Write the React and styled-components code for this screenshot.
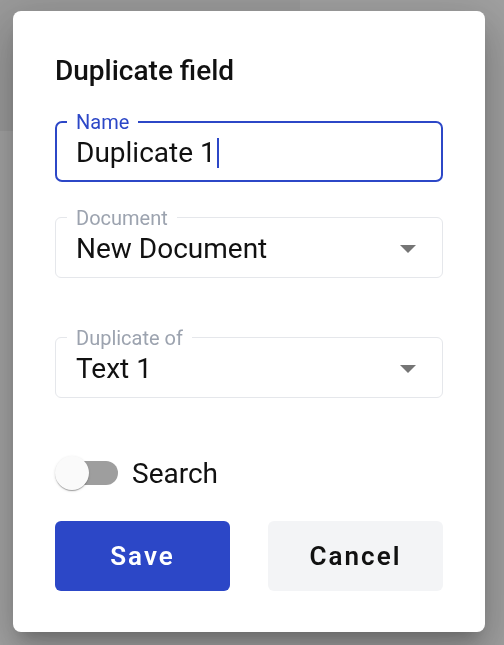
import React from "react";
import styled, { createGlobalStyle } from "styled-components";

const BLUE = "#2c47c7";

function Field({ label, value, focused, select, space }) {
  return (
    <FieldBox $focused={focused} $space={space}>
      <Legend $focused={focused}>{label}</Legend>
      <Value>
        {value}
        {focused && <Caret />}
      </Value>
      {select && <Arrow />}
    </FieldBox>
  );
}

function App() {
  return (
    <>
      <GlobalStyle />
      <Page>
        <LeftPanel>
          <PanelHeader />
        </LeftPanel>
        <RightPanel />
      </Page>
      <Backdrop>
        <Dialog>
          <Title>Duplicate field</Title>
          <Field label="Name" value="Duplicate 1" focused space={0} />
          <Field label="Document" value="New Document" select space={35} />
          <Field label="Duplicate of" value="Text 1" select space={59} />
          <ToggleRow>
            <Switch>
              <Track />
              <Thumb />
            </Switch>
            <ToggleLabel>Search</ToggleLabel>
          </ToggleRow>
          <Actions>
            <Button $primary>Save</Button>
            <Button>Cancel</Button>
          </Actions>
        </Dialog>
      </Backdrop>
    </>
  );
}

const GlobalStyle = createGlobalStyle`
  html, body {
    margin: 0;
    height: 100%;
  }
  body {
    font-family: Roboto, "Noto Sans", Arial, sans-serif;
    overflow: hidden;
  }
`;

const Page = styled.div`
  display: grid;
  grid-template-columns: 300px 1fr;
  height: 100vh;
`;

const LeftPanel = styled.div`
  display: flex;
  flex-direction: column;
  background-color: #ffffff;
`;

const PanelHeader = styled.div`
  height: 131px;
  background-color: #f1f1f1;
`;

const RightPanel = styled.div`
  background-color: #fafafa;
`;

const Backdrop = styled.div`
  position: fixed;
  inset: 0;
  display: flex;
  align-items: flex-start;
  padding: 11px 0 0 13px;
  background-color: rgba(0, 0, 0, 0.365);
`;

const Dialog = styled.div`
  width: 472px;
  box-sizing: border-box;
  padding: 43px 42px 41px;
  display: flex;
  flex-direction: column;
  background-color: #ffffff;
  border-radius: 8px;
  box-shadow: 0 11px 15px -7px rgba(0, 0, 0, 0.2),
    0 24px 38px 3px rgba(0, 0, 0, 0.14), 0 9px 46px 8px rgba(0, 0, 0, 0.12);
`;

const Title = styled.h2`
  margin: 0 0 33px;
  font-size: 28px;
  line-height: 34px;
  font-weight: 500;
  color: #111111;
`;

const FieldBox = styled.div`
  position: relative;
  display: flex;
  align-items: flex-start;
  height: 61px;
  box-sizing: border-box;
  margin-top: ${(p) => p.$space}px;
  border: ${(p) => (p.$focused ? `2px solid ${BLUE}` : "1px solid #e5e7eb")};
  border-radius: ${(p) => (p.$focused ? 7 : 6)}px;
  padding: ${(p) => (p.$focused ? "13px 25px 0 19px" : "14px 26px 0 20px")};
`;

const Legend = styled.span`
  position: absolute;
  top: ${(p) => (p.$focused ? -11 : -10)}px;
  left: ${(p) => (p.$focused ? 10 : 11)}px;
  padding: 0 9px;
  background-color: #ffffff;
  font-size: 20px;
  line-height: 20px;
  color: ${(p) => (p.$focused ? BLUE : "#9ca3af")};
`;

const Value = styled.div`
  flex: 1;
  display: flex;
  align-items: center;
  font-size: 28px;
  line-height: 33px;
  color: #111111;
`;

const Caret = styled.span`
  width: 2px;
  height: 30px;
  margin-left: 1px;
  background-color: ${BLUE};
`;

const Arrow = styled.span`
  margin-top: 13px;
  width: 0;
  height: 0;
  border-left: 8.5px solid transparent;
  border-right: 8.5px solid transparent;
  border-top: 8.5px solid #757575;
`;

const ToggleRow = styled.div`
  display: flex;
  align-items: center;
  height: 36px;
  margin-top: 57px;
`;

const Switch = styled.div`
  position: relative;
  display: flex;
  align-items: center;
  justify-content: flex-end;
  width: 63px;
  height: 36px;
`;

const Track = styled.div`
  width: 52px;
  height: 24px;
  border-radius: 12px;
  background-color: #9e9e9e;
`;

const Thumb = styled.div`
  position: absolute;
  left: 0;
  top: 1px;
  width: 34px;
  height: 34px;
  border-radius: 50%;
  background-color: #fafafa;
  box-shadow: 0 2px 1px -1px rgba(0, 0, 0, 0.2), 0 1px 1px 0 rgba(0, 0, 0, 0.14),
    0 1px 3px 0 rgba(0, 0, 0, 0.12);
`;

const ToggleLabel = styled.span`
  margin-left: 14px;
  font-size: 28px;
  line-height: 33px;
  color: #111111;
`;

const Actions = styled.div`
  display: grid;
  grid-template-columns: 1fr 1fr;
  gap: 38px;
  margin-top: 30px;
`;

const Button = styled.button`
  height: 70px;
  border: none;
  border-radius: 6px;
  font-family: Roboto, "Noto Sans", Arial, sans-serif;
  font-size: 26px;
  font-weight: 600;
  letter-spacing: 2px;
  color: ${(p) => (p.$primary ? "#ffffff" : "#111111")};
  background-color: ${(p) => (p.$primary ? BLUE : "#f3f4f6")};
  cursor: pointer;
`;

export default App;
